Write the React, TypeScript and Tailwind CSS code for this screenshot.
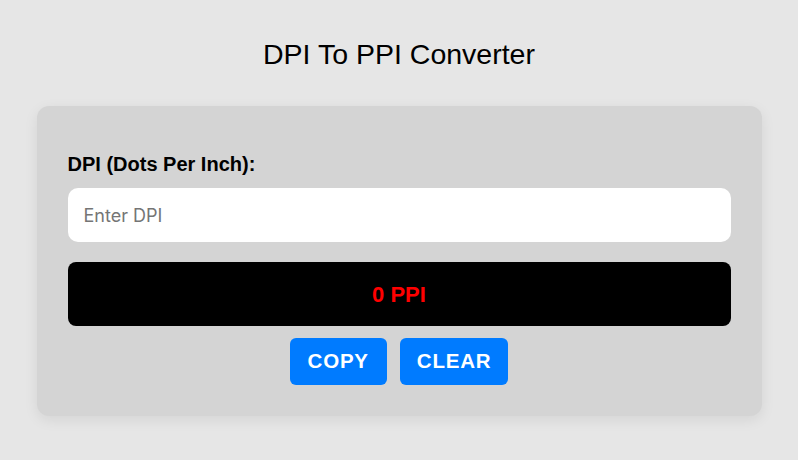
import React from "react";

export default function App() {
  return (
    <div className="w-[798px] h-[460px] bg-[#e6e6e6] flex flex-col items-center" style={{ fontFamily: '"Liberation Sans", Arial, sans-serif' }}>
      <h1 className="mt-[37px] h-[34px] text-[28.5px] leading-[34px] text-black">DPI To PPI Converter</h1>
      <div className="mt-[35px] w-[725px] bg-[#d4d4d4] rounded-[12px] shadow-[0_4px_14px_rgba(0,0,0,0.08)] px-[31px] pt-[47px] pb-[31px] flex flex-col">
        <label className="text-[20px] leading-[23px] font-bold text-black">DPI (Dots Per Inch):</label>
        <input
          placeholder="Enter DPI"
          className="mt-[12px] h-[54px] w-full bg-white rounded-[10px] px-[16px] text-[18px] outline-none placeholder:text-[#757575]"
          style={{ fontFamily: 'Inter, sans-serif' }}
        />
        <div className="mt-[20px] h-[64px] bg-black rounded-[8px] flex items-center justify-center text-[#ff0000] font-bold text-[22px]">
          0 PPI
        </div>
        <div className="mt-[12px] flex justify-center gap-[13px]">
          <button className="h-[47px] px-[18px] bg-[#007bff] text-white font-bold text-[20.5px] tracking-[0.8px] rounded-[6px]">COPY</button>
          <button className="h-[47px] px-[17px] bg-[#007bff] text-white font-bold text-[20.5px] tracking-[0.8px] rounded-[6px]">CLEAR</button>
        </div>
      </div>
    </div>
  );
}
